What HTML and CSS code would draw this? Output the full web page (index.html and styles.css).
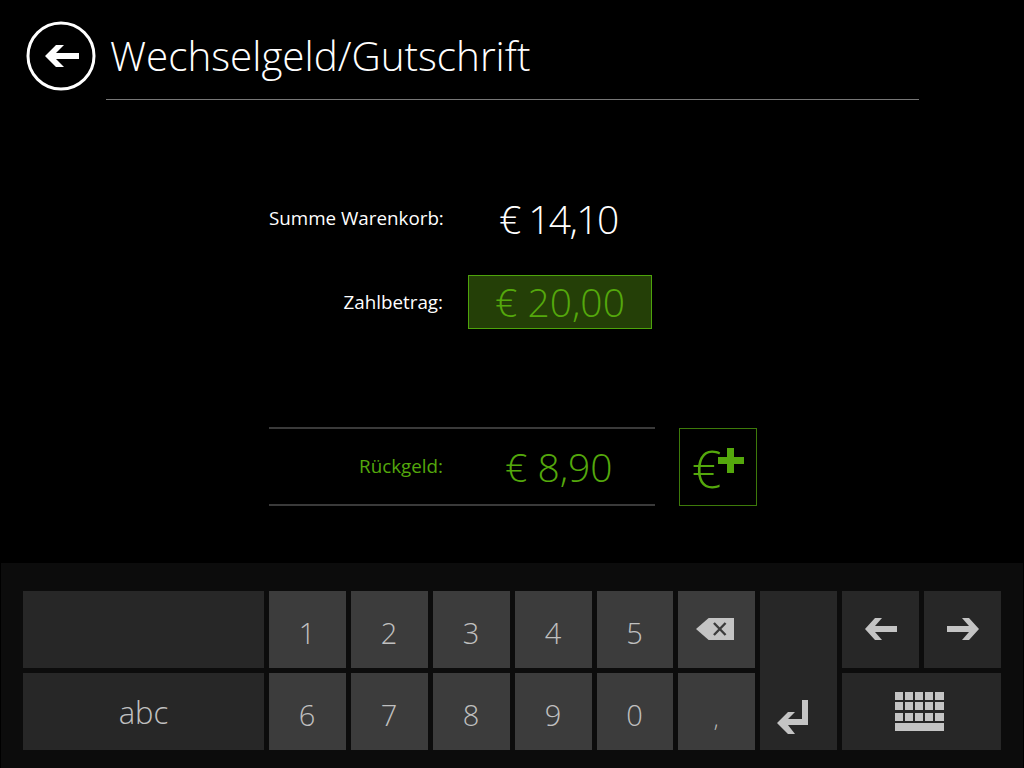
FILE: index.html
```html
<!DOCTYPE html>
<html lang="de">
<head>
  <meta charset="UTF-8">
  <title>Wechselgeld/Gutschrift</title>
  <link rel="stylesheet" href="styles.css">
</head>
<body>

  <!-- Header -->
  <div class="header">
    <a href="#" class="back-button">
      <svg width="70" height="70" viewBox="0 0 70 70">
        <circle cx="35" cy="35" r="33" fill="none" stroke="#fff" stroke-width="3"/>
        <path d="M19 35 L30 24 H38 L30 32 H53 V38 H30 L38 46 H30 Z" fill="#fff"/>
      </svg>
    </a>
    <h1>Wechselgeld/Gutschrift</h1>
  </div>

  <!-- Amounts -->
  <div class="amounts">
    <div class="amount-row total-row">
      <span class="amount-label">Summe Warenkorb:</span>
      <span class="amount-value total-value">€ 14,10</span>
    </div>
    <div class="amount-row paid-row">
      <span class="amount-label">Zahlbetrag:</span>
      <span class="paid-box">€ 20,00</span>
    </div>
  </div>

  <!-- Change -->
  <div class="change">
    <div class="change-row">
      <span class="amount-label">Rückgeld:</span>
      <span class="amount-value">€ 8,90</span>
    </div>
    <button class="voucher-button">€<svg width="28" height="28" viewBox="0 0 28 28"><path d="M10 1 H17 V10 H27 V17 H17 V26 H10 V17 H1 V10 H10 Z" fill="#54a80c"/></svg></button>
  </div>

  <!-- Keyboard -->
  <div class="keyboard">
    <button class="key dark"></button>
    <button class="key">1</button>
    <button class="key">2</button>
    <button class="key">3</button>
    <button class="key">4</button>
    <button class="key">5</button>
    <button class="key icon-key back-key">
      <svg width="38" height="24" viewBox="0 0 36 24" preserveAspectRatio="none">
        <path d="M0 12 L12 1 H36 V23 H12 Z" fill="#c4c4c4"/>
        <path d="M17 6 L28 18 M28 6 L17 18" stroke="#3c3c3c" stroke-width="2.2" fill="none"/>
      </svg>
    </button>
    <button class="key dark enter-key">
      <svg width="32" height="36" viewBox="0 0 32 36">
        <path d="M0 24 L11 13 H18 L11 20 H25 V1 H31 V26 H11 L18 35 H11 Z" fill="#c4c4c4"/>
      </svg>
    </button>
    <button class="key dark icon-key">
      <svg width="32" height="22" viewBox="0 0 32 22">
        <path d="M0 11 L10 0 H17 L10 8 H32 V14 H10 L17 22 H10 Z" fill="#c4c4c4"/>
      </svg>
    </button>
    <button class="key dark icon-key">
      <svg width="32" height="22" viewBox="0 0 32 22">
        <path d="M32 11 L22 0 H15 L22 8 H0 V14 H22 L15 22 H22 Z" fill="#c4c4c4"/>
      </svg>
    </button>
    <button class="key dark abc-key">abc</button>
    <button class="key">6</button>
    <button class="key">7</button>
    <button class="key">8</button>
    <button class="key">9</button>
    <button class="key">0</button>
    <button class="key comma-key">,</button>
    <button class="key dark board-key">
      <svg width="50" height="40" viewBox="0 0 50 40">
        <path fill="#c4c4c4" d="M0 0h8v8H0zM10 0h8v8h-8zM20 0h8v8h-8zM30 0h8v8h-8zM40 0h9v8h-9zM0 10h8v8H0zM10 10h8v8h-8zM20 10h8v8h-8zM30 10h8v8h-8zM40 10h9v8h-9zM0 21h8v8H0zM10 21h8v8h-8zM20 21h8v8h-8zM30 21h8v8h-8zM40 21h9v8h-9zM0 31h49v8H0z"/>
      </svg>
    </button>
  </div>

</body>
</html>
```

FILE: styles.css
```css
html, body {
  height: 100%;
}

body {
  margin: 0;
  height: 768px;
  overflow: hidden;
  background-color: #000;
  color: #fff;
  font-family: "Open Sans", sans-serif;
  display: flex;
  flex-direction: column;
}

.header {
  display: flex;
  align-items: center;
  height: 99px;
  width: 892px;
  margin-left: 26px;
  box-sizing: border-box;
  padding-top: 13px;
  position: relative;
}

.header::after {
  content: "";
  position: absolute;
  left: 80px;
  right: -1px;
  bottom: -1px;
  height: 1px;
  background-color: #777;
}

.back-button {
  display: block;
  height: 70px;
}

h1 {
  margin: 0 0 0 14px;
  font-size: 40.4px;
  font-weight: 300;
  line-height: 48px;
}

.amounts {
  margin-top: 91px;
  padding-left: 269px;
}

.amount-row {
  display: flex;
  align-items: center;
  height: 60px;
}

.total-row {
  box-sizing: border-box;
  padding-bottom: 4px;
}

.paid-row {
  height: 54px;
  margin-top: 25px;
}

.amount-label {
  width: 174px;
  flex-shrink: 0;
  white-space: nowrap;
  text-align: right;
  font-size: 18.8px;
}

.amount-value {
  margin-left: 62px;
  font-size: 39px;
  font-weight: 300;
}

.total-value {
  margin-left: 56px;
  letter-spacing: -1.6px;
}

.paid-box {
  margin-left: 25px;
  width: 184px;
  height: 54px;
  box-sizing: border-box;
  border: 1px solid #4da30b;
  background-color: #243f07;
  color: #54a80c;
  font-size: 39px;
  font-weight: 300;
  line-height: 52px;
  text-align: center;
}

.change {
  display: flex;
  margin-top: 99px;
  margin-left: 269px;
  height: 78px;
}

.change-row {
  width: 386px;
  height: 79px;
  margin-top: -1px;
  box-sizing: border-box;
  border-top: 2px solid #3a3a3a;
  border-bottom: 2px solid #3a3a3a;
  display: flex;
  align-items: center;
  color: #54a80c;
  padding-bottom: 1px;
}

.voucher-button {
  margin-left: 24px;
  width: 78px;
  height: 78px;
  padding: 0 0 0 1px;
  background: none;
  border: 1px solid #3d7a0a;
  color: #54a80c;
  font-family: "Open Sans", sans-serif;
  font-size: 52px;
  font-weight: 300;
  display: flex;
  align-items: center;
  justify-content: center;
}

.voucher-button svg {
  margin-bottom: 12px;
  margin-left: -4px;
}

.keyboard {
  margin: 57px 1px 0;
  flex: 1;
  box-sizing: border-box;
  background-color: #0c0c0c;
  padding: 28px 22px 0;
  display: grid;
  grid-template-columns: 241px repeat(4, 77px) 76px repeat(4, 77px);
  grid-template-rows: 77px 77px;
  gap: 5px;
}

.key {
  background-color: #3c3c3c;
  border: none;
  padding: 5px 1px 0 0;
  color: #c0c0c0;
  font-family: "Open Sans", sans-serif;
  font-size: 29px;
  font-weight: 300;
  display: flex;
  align-items: center;
  justify-content: center;
}

.key.dark {
  background-color: #272727;
}

.icon-key {
  padding: 0 0 2px 0;
}

.back-key {
  padding-right: 3px;
}

.enter-key {
  grid-row: span 2;
  grid-column: 8;
  align-items: flex-end;
  padding: 0 12px 15px 0;
}

.abc-key {
  padding: 0;
  font-size: 31px;
}

.comma-key {
  padding-top: 12px;
  font-size: 22px;
}

.board-key {
  grid-column: span 2;
  padding: 0 4px 0 0;
}
```
